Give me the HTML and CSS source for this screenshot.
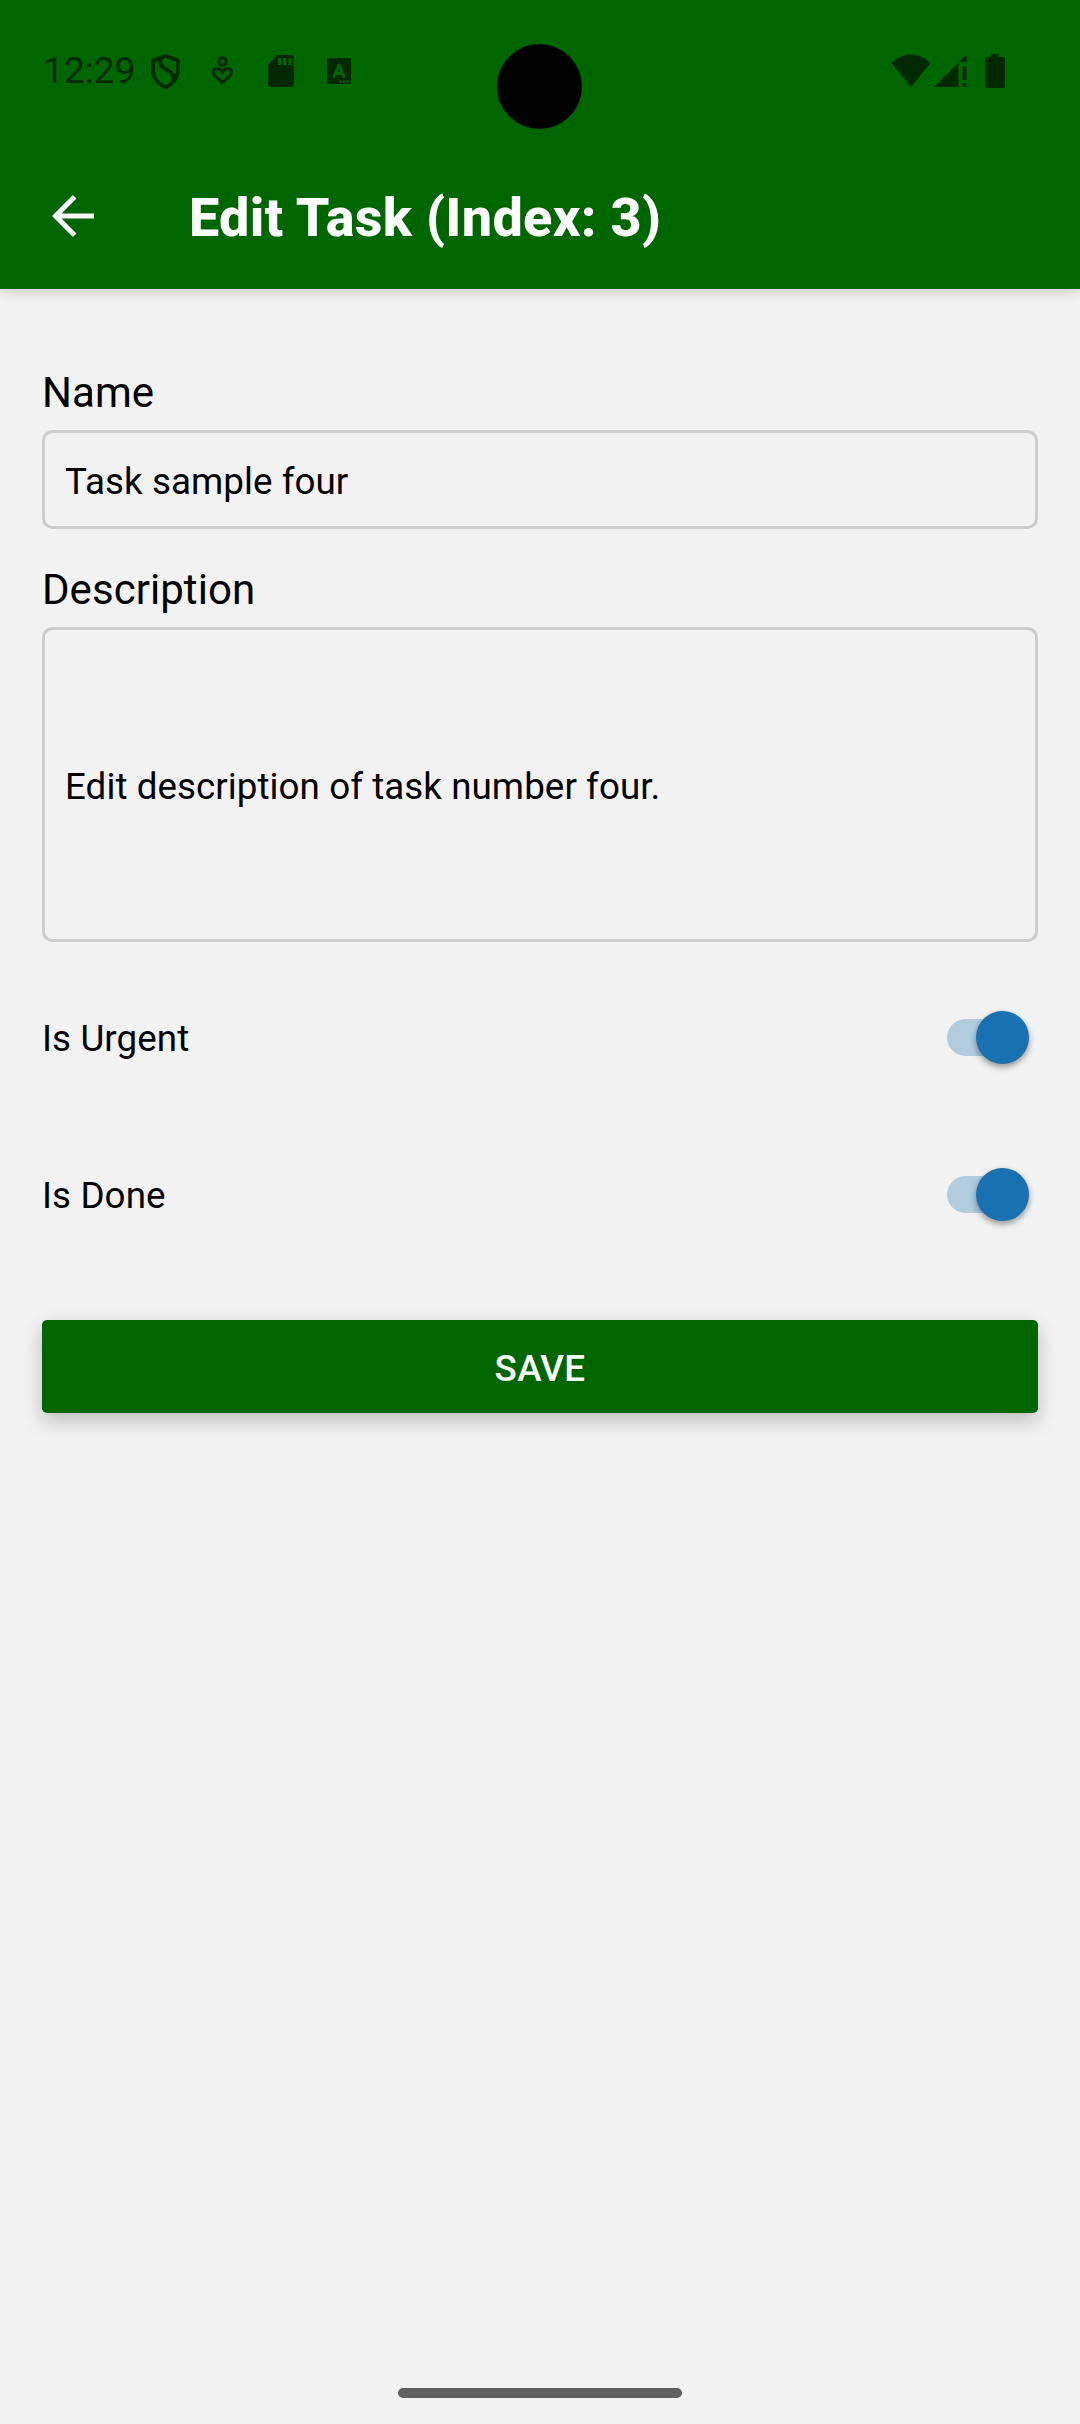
FILE: index.html
```html
<!DOCTYPE html>
<html lang="en">
<head>
<meta charset="utf-8">
<title>Edit Task</title>
<link rel="stylesheet" href="styles.css">
</head>
<body>
<div class="screen">
  <header class="top">
    <div class="status">
      <span class="clock">12:29</span>
      <svg class="ic shield" width="32" height="38" viewBox="0 0 32 38" fill="none" stroke="currentColor" stroke-width="3.600" stroke-linejoin="round"><path d="M15.500 3L3 7.500V17C3 25 8.500 31.500 15.500 34.500C22.500 31.500 28 25 28 17V7.500Z"/><path d="M10.500 5V9.500C10.500 17.500 23.500 16.500 23.500 24C23.500 26 23 27 22 29" stroke-width="4"/></svg>
      <svg class="ic heart" width="24" height="30" viewBox="0 0 24 30" fill="none" stroke="currentColor" stroke-width="3"><circle cx="11.500" cy="5.500" r="3.800"/><path d="M11.500 26.500L4.500 20.500C.8 16.500 2.500 12.500 6 12.500C8.500 12.500 10 14 11.500 16C13 14 14.500 12.500 17 12.500C20.500 12.500 22.200 16.500 18.500 20.500Z"/></svg>
      <svg class="ic sd" width="26" height="32" viewBox="0 0 26 32" fill="currentColor" fill-rule="evenodd"><path d="M9.500 0H23Q26 0 26 3V29Q26 32 23 32H3Q0 32 0 29V9.500ZM10 3V10H13V3ZM15.200 3V10H18.200V3ZM20.400 3V10H23.400V3Z"/></svg>
      <svg class="ic abox" width="24" height="26" viewBox="0 0 24 26"><rect width="24" height="26" rx="1.500" fill="currentColor"/><path d="M7 18.500L12 7L17 18.500M8.500 15.500H15.500" fill="none" stroke="#060" stroke-width="3" stroke-linejoin="round" stroke-linecap="round"/><path d="M12.500 22.500h2.200v2.200h-2.200zM16 22.500h2.200v2.200H16zM19.500 22.500h2.200v2.200h-2.200z" fill="#060"/></svg>
      <span class="camera"></span>
      <svg class="ic wifi" width="40" height="33" viewBox="0 0 40 33" fill="currentColor"><path d="M0.500 9Q9 .5 20 .5T39.500 9L20 33Z"/></svg>
      <svg class="ic signal" width="33" height="33" viewBox="0 0 33 33" fill="currentColor"><path d="M0 33L24.500 8.500V33ZM25 8L32.500 .5V8ZM28.500 12.500h4V26h-4zM28.500 29.500h4V33h-4z"/></svg>
      <svg class="ic battery" width="20" height="34" viewBox="0 0 20 34" fill="currentColor"><path d="M6 0H14V3H18Q20 3 20 5V32Q20 34 18 34H2Q0 34 0 32V5Q0 3 2 3H6Z"/></svg>
    </div>
    <div class="bar">
      <svg class="back" width="42" height="42" viewBox="0 0 42 42" fill="none" stroke="#fff" stroke-width="5"><path d="M42 21H4M22.700 1.800L3.500 21L22.700 40.200"/></svg>
      <h1 class="title">Edit Task (Index: 3)</h1>
    </div>
  </header>
  <main class="form">
    <label class="label">Name</label>
    <div class="field">Task sample four</div>
    <label class="label">Description</label>
    <div class="field area">Edit description of task number four.</div>
    <div class="row first"><span class="text">Is Urgent</span><span class="switch"><span class="thumb"></span></span></div>
    <div class="row"><span class="text">Is Done</span><span class="switch"><span class="thumb"></span></span></div>
    <button class="save">SAVE</button>
  </main>
  <div class="home"></div>
</div>
</body>
</html>
```
FILE: styles.css
```css
* { box-sizing: border-box; }
body { margin: 0; background: #f2f2f2; font-family: Roboto, sans-serif; color: #000; }
.screen { width: 1080px; height: 2424px; display: flex; flex-direction: column; overflow: hidden; }
.top { height: 289px; background: #060; box-shadow: 0 2px 14px rgba(0,0,0,.18); }
.status { position: relative; height: 142px; display: flex; align-items: flex-start; color: #002900; padding-left: 43px; padding-right: 75px; }
.clock { font-size: 37px; line-height: 44px; margin-top: 49px; width: 107px; letter-spacing: .1px; white-space: nowrap; }
.shield { margin-top: 53px; }
.heart { margin: 56px 0 0 29px; }
.sd { margin: 55px 0 0 33px; }
.abox { margin: 58px 0 0 33px; }
.wifi { margin: 54px 0 0 auto; }
.signal { margin: 54px 0 0 3px; }
.battery { margin: 54px 0 0 18px; }
.camera { position: absolute; left: 497px; top: 44px; width: 85px; height: 85px; border-radius: 50%; background: #000; }
.bar { display: flex; align-items: center; height: 147px; padding-left: 52px; }
.title { margin: 5px 0 0 95px; font-size: 54px; line-height: 62px; color: #fff; font-weight: 800; letter-spacing: .32px; }
.form { flex: 1; padding: 79px 42px 0; display: flex; flex-direction: column; }
.label { font-size: 42px; line-height: 49px; margin-bottom: 13px; letter-spacing: .05px; }
.field { height: 99px; border: 3px solid #ccc; border-radius: 10.500px; padding: 3px 20px 0; display: flex; align-items: center; font-size: 36.750px; letter-spacing: .06px; margin-bottom: 36px; }
.area { height: 315px; margin-bottom: 0; }
.row { display: flex; justify-content: space-between; align-items: center; height: 157px; font-size: 36.750px; letter-spacing: .1px; }
.text { padding-top: 2px; }
.first { margin-top: 17px; }
.switch { position: relative; width: 82px; height: 37px; margin-right: 9px; border-radius: 19px; background: #b1ccdf; }
.thumb { position: absolute; right: 0; top: -8px; width: 53px; height: 53px; border-radius: 50%; background: #1a71b1; box-shadow: 0 3px 6px rgba(0,0,0,.4); }
.save { height: 93px; margin-top: 47px; padding: 4px 0 0; border: 0; border-radius: 5px; background: #060; color: #fff; font: 500 36.750px Roboto, sans-serif; letter-spacing: .3px; box-shadow: 0 8px 20px rgba(0,0,0,.22); }
.home { width: 284px; height: 10px; border-radius: 5px; background: #606060; margin: 0 auto 26px; }
```
